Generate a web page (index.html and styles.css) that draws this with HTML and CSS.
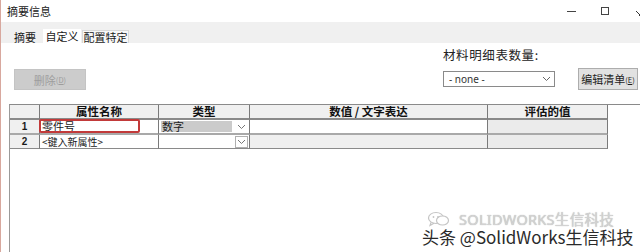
FILE: index.html
```html
<!DOCTYPE html>
<html lang="zh-CN">
<head>
<meta charset="utf-8">
<title>摘要信息</title>
<link rel="stylesheet" href="styles.css">
</head>
<body>
<div class="window">
  <div class="titlebar">
    <span class="title">摘要信息</span>
    <div class="controls">
      <span class="ctl ctl-min"></span>
      <span class="ctl ctl-max"></span>
      <span class="ctl ctl-close">
        <svg width="10" height="10" viewBox="0 0 10 10"><path d="M1 1 L9 9 M9 1 L1 9" stroke="#333" stroke-width="1"/></svg>
      </span>
    </div>
  </div>
  <div class="tabstrip">
    <span class="tab tab-plain">摘要</span>
    <span class="tab tab-active">自定义</span>
    <span class="tab tab-side">配置特定</span>
  </div>
  <div class="content">
    <div class="toolbar">
      <button class="btn btn-disabled">删除<span class="acc">(<u>D</u>)</span></button>
      <div class="bom">
        <div class="bom-label">材料明细表数量:</div>
        <div class="bom-row">
          <div class="select">
            <span class="select-text">- none -</span>
            <svg class="chev" width="9" height="6" viewBox="0 0 9 6"><path d="M1 1 L4.5 4.5 L8 1" fill="none" stroke="#666" stroke-width="1"/></svg>
          </div>
          <button class="btn btn-edit">编辑清单<span class="acc">(<u>E</u>)</span></button>
        </div>
      </div>
    </div>
    <div class="panel">
      <div class="grid">
        <div class="cell hd num"></div>
        <div class="cell hd">属性名称</div>
        <div class="cell hd">类型</div>
        <div class="cell hd">数值 / 文字表达</div>
        <div class="cell hd">评估的值</div>

        <div class="cell r1 num">1</div>
        <div class="cell r1 name">零件号<span class="mark"></span></div>
        <div class="cell r1 type">
          <div class="combo-field"><span class="combo-text">数字</span></div>
          <svg class="chev-s" width="9" height="6" viewBox="0 0 9 6"><path d="M1 1 L4.5 4.5 L8 1" fill="none" stroke="#777" stroke-width="1"/></svg>
        </div>
        <div class="cell r1 val"></div>
        <div class="cell r1 eval"></div>

        <div class="cell r2 num">2</div>
        <div class="cell r2 name">&lt;键入新属性&gt;</div>
        <div class="cell r2 type">
          <span class="combo-empty"></span>
          <span class="chev-box"><svg width="9" height="6" viewBox="0 0 9 6"><path d="M1 1 L4.5 4.5 L8 1" fill="none" stroke="#777" stroke-width="1"/></svg></span>
        </div>
        <div class="cell r2 val grey"></div>
        <div class="cell r2 eval"></div>
      </div>
    </div>
  </div>
  <div class="wm">
    <div class="wm-top">
      <svg class="wm-icon" width="24" height="16" viewBox="0 0 24 16">
        <ellipse cx="9" cy="7" rx="7.5" ry="5.5" fill="none" stroke="#c4c4c4" stroke-width="1.2"/>
        <path d="M4 11.5 L3 14.5 L7 12.3" fill="none" stroke="#c4c4c4" stroke-width="1.2"/>
        <ellipse cx="15.5" cy="9.5" rx="6" ry="4.5" fill="#fff" stroke="#c4c4c4" stroke-width="1.2"/>
        <circle cx="6.5" cy="6" r="0.9" fill="#c4c4c4"/>
        <circle cx="11" cy="6" r="0.9" fill="#c4c4c4"/>
      </svg>
      <span class="wm-small">SOLIDWORKS生信科技</span>
    </div>
    <div class="wm-big">头条 @SolidWorks生信科技</div>
  </div>
</div>
</body>
</html>
```

FILE: styles.css
```css
* { box-sizing: border-box; }
html, body {
  margin: 0;
  padding: 0;
  width: 640px;
  height: 252px;
  overflow: hidden;
  background: #fff;
}
body {
  font-family: "Noto Sans CJK SC", "Noto Sans", sans-serif;
  font-size: 12px;
  color: #1a1a1a;
}
.window {
  position: relative;
  width: 640px;
  height: 252px;
  border-left: 1px solid #d8a89e;
  display: flex;
  flex-direction: column;
  background: #fff;
}
.titlebar {
  height: 22px;
  display: flex;
  align-items: center;
  padding-left: 6px;
  flex: none;
}
.title {
  font-size: 11px;
  line-height: 14px;
  color: #222;
}
.controls {
  margin-left: auto;
  display: flex;
  align-items: center;
  height: 22px;
}
.ctl { display: block; }
.ctl-min {
  width: 9px;
  height: 1px;
  background: #444;
  margin-right: 25px;
  margin-top: 1px;
}
.ctl-max {
  width: 8px;
  height: 8px;
  border: 1px solid #444;
  margin-right: 26px;
}
.ctl-close {
  width: 5px;
  height: 10px;
  overflow: hidden;
}
.tabstrip {
  height: 21px;
  flex: none;
  background: #f0f0f0;
  display: flex;
  align-items: flex-end;
  padding-left: 6px;
}
.tab {
  display: block;
  font-size: 11px;
  line-height: 12px;
  height: 12px;
  text-align: center;
  color: #1a1a1a;
  white-space: nowrap;
}
.tab-plain {
  width: 36px;
}
.tab-active {
  width: 38px;
  height: 14px;
  padding-top: 1px;
  background: #fff;
}
.tab-side {
  width: 47px;
  height: 13px;
  margin-left: 1px;
  background: #f8f8f8;
  border: 1px solid #d9d9d9;
  border-bottom: none;
}
.content {
  flex: 1;
  display: flex;
  flex-direction: column;
  background: #fff;
}
.toolbar {
  height: 61px;
  flex: none;
  display: flex;
  padding-left: 13px;
  padding-right: 2px;
}
.btn {
  font-family: "Noto Sans CJK SC", "Noto Sans", sans-serif;
  font-size: 11px;
  padding: 0;
  margin: 0;
  display: flex;
  align-items: center;
  justify-content: center;
  white-space: nowrap;
}
.acc { font-size: 7.5px; }
.btn-disabled {
  margin-top: 26px;
  width: 72px;
  height: 21px;
  background: #cccccc;
  border: 1px solid #c4c4c4;
  color: #9d9d9d;
}
.bom {
  margin-left: auto;
  width: 195px;
  display: flex;
  flex-direction: column;
}
.bom-label {
  margin-top: 5px;
  line-height: 14px;
  height: 14px;
  font-size: 12.5px;
  color: #222;
  letter-spacing: 0.6px;
}
.bom-row {
  margin-top: 6px;
  display: flex;
  align-items: center;
  height: 22px;
}
.select {
  width: 112px;
  height: 16px;
  border: 1px solid #8a8a8a;
  background: #fff;
  display: flex;
  align-items: center;
  padding-left: 5px;
  padding-right: 3px;
}
.select-text {
  font-family: "Noto Sans", sans-serif;
  font-size: 10px;
  color: #333;
}
.chev { margin-left: auto; }
.btn-edit {
  margin-left: auto;
  width: 60px;
  height: 22px;
  background: #e1e1e1;
  border: 1px solid #adadad;
  color: #1e1e1e;
}
.panel {
  flex: 1;
  margin-left: 8px;
  border-left: 1px solid #9a9a9a;
  border-top: 1px solid #8a8a8a;
  background: #fff;
}
.grid {
  display: grid;
  width: 598px;
  grid-template-columns: 30px 119px 91px 238px 120px;
  grid-template-rows: 15px 15px 14px;
}
.cell {
  border-right: 1px solid #7a7a7a;
  font-size: 11px;
  line-height: 13px;
  position: relative;
  display: flex;
  align-items: center;
  overflow: visible;
  white-space: nowrap;
}
.hd {
  background: #f0f0f0;
  border-bottom: 2px solid #8a8a8a;
  font-weight: bold;
  justify-content: center;
  font-size: 11.5px;
  color: #111;
}
.r1 { border-bottom: 2px solid #a9a9a9; }
.r2 { border-bottom: 1px solid #8a8a8a; }
.num {
  background: #f0f0f0;
  justify-content: center;
  font-weight: bold;
  font-family: "Liberation Sans", sans-serif;
  font-size: 10px;
}
.name { padding-left: 2px; background: #fff; }
.r2.name { font-size: 10px; }
.type { padding-left: 2px; }
.combo-field {
  flex: 0 0 71px;
  width: 71px;
  height: 11px;
  background-color: #cbcbcb;
  display: flex;
  align-items: center;
  padding-left: 1px;
}
.combo-text {
  font-size: 11px;
  line-height: 11px;
  color: #222;
  background-color: #cbcbcb;
}
.chev-s { margin-left: 5px; }
.combo-empty {
  width: 74px;
  height: 11px;
}
.chev-box {
  width: 13px;
  height: 12px;
  border: 1px solid #b0b0b0;
  background: #fff;
  display: flex;
  align-items: center;
  justify-content: center;
}
.val { background: #fff; }
.grey { background: #efefef; }
.eval { background: #ebebeb; }
.mark {
  position: absolute;
  left: -1px;
  top: -1px;
  width: 101px;
  height: 14px;
  border: 2px solid #c23a3a;
  border-radius: 2px;
}
.wm {
  position: absolute;
  left: 421px;
  top: 211px;
  width: 215px;
}
.wm-top {
  display: flex;
  align-items: center;
  padding-left: 5px;
  height: 15px;
}
.wm-icon { margin-right: 8px; }
.wm-small {
  font-family: "Noto Sans", "Noto Sans CJK SC", sans-serif;
  font-size: 14.5px;
  line-height: 14px;
  color: #d2d2d2;
  text-shadow: 0 0 1px #aaa;
  letter-spacing: 0.3px;
}
.wm-big {
  font-family: "Noto Sans CJK SC", sans-serif;
  font-size: 17px;
  line-height: 18px;
  color: #2a2a2a;
  margin-top: 2px;
  text-shadow: 1px 1px 0 #fff, -1px -1px 0 #fff, 1px -1px 0 #fff, -1px 1px 0 #fff;
}
```
